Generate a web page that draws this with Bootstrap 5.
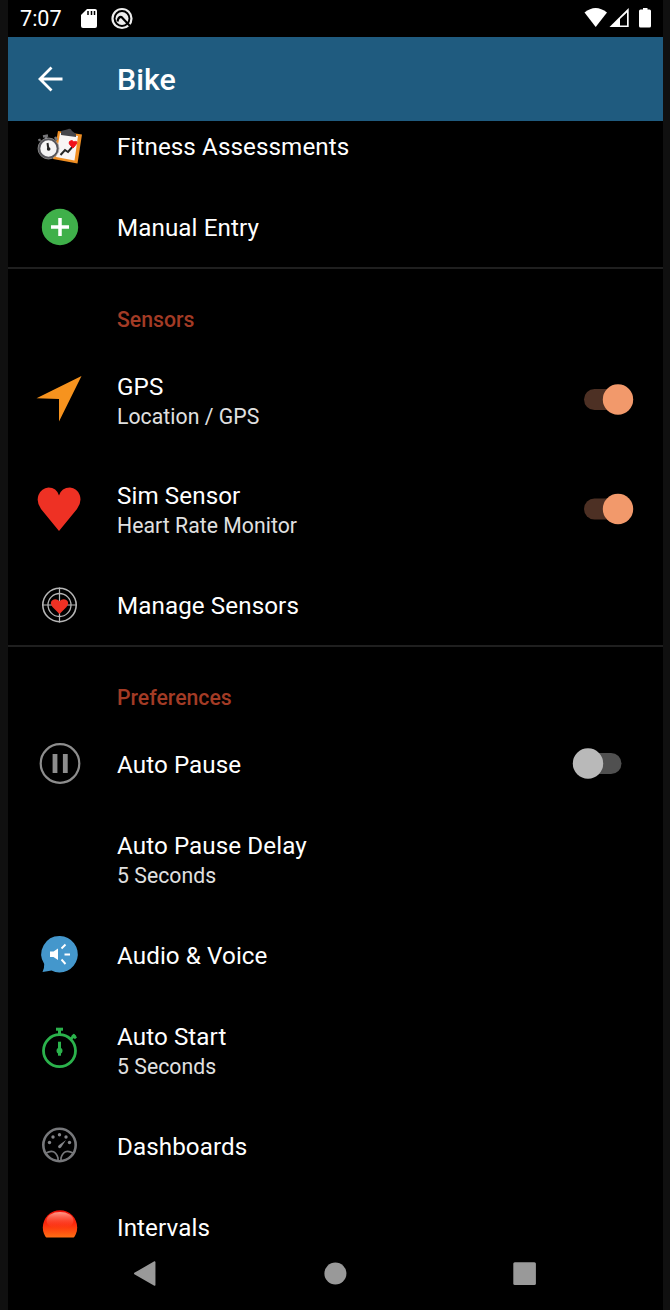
<!DOCTYPE html>
<html lang="en">
<head>
<meta charset="utf-8">
<meta name="viewport" content="width=device-width, initial-scale=1">
<title>Bike</title>
<link href="https://cdn.jsdelivr.net/npm/bootstrap@5.3.0/dist/css/bootstrap.min.css" rel="stylesheet">
<style>
body{background:#101010;font-family:Roboto,"Liberation Sans",sans-serif;color:#fff;overflow:hidden}
.phone{width:655px;height:1310px;margin-left:8px;background:#000}
.status{height:37px;padding-left:12px;font-size:21.6px;line-height:37px}
.status svg{flex:none}
.appbar{height:84px;background:#1f5b7f;padding-left:25px}
.appbar h1{font-size:30.4px;font-weight:500;line-height:36px;margin-left:30px;padding-top:2px}
.settings{height:1124px}
.settings-inner{margin-top:-14.5px}
.item{height:81.2px;padding-left:25px}
.item.before-rule{height:79.3px}
.item.tall{height:109.75px}
.item svg,.appbar svg{width:54px;height:54px;flex:none}
.item .texts{margin-left:30px;padding-top:2px}
.item.first-row .texts{padding-top:0}
.item.tall .texts{padding-top:4px}
.gap-icon{width:54px;flex:none}
.t1{font-size:24.2px;line-height:30px;letter-spacing:.09px}
.t2{font-size:21.2px;line-height:30px;color:#e0e0e0;letter-spacing:.05px}
.rule{height:2px;background:#1f1f1f}
.category{height:75.7px;padding:38px 0 0 109px;font-size:21.2px;line-height:26px;font-weight:500;color:#a33b25;letter-spacing:.02px}
.toggle{margin-left:auto;width:74px;height:32px}
.item .toggle svg{width:74px;height:32px;display:block;overflow:visible}
.navkeys{height:65px}
.navkeys svg{width:655px;height:65px}
</style>
</head>
<body>
<main class="phone d-flex flex-column overflow-hidden">
  <div class="status d-flex">
    <span>7:07</span>
    <svg class="ms-auto" width="600" height="37" viewBox="63 0 600 37">
      <path d="M87 9h8q2 0 2 2v15q0 2-2 2H83q-2 0-2-2V15z" fill="#fff"/>
      <path d="M88 11v4M91.5 11v4M94.5 11v4" stroke="#000" stroke-width="1.5"/>
      <circle cx="122" cy="18.500" r="9.500" fill="none" stroke="#eee" stroke-width="2.200"/>
      <circle cx="122" cy="18.500" r="6.500" fill="#eee"/>
      <path d="M117.500 21.500q1-5 4-4.500l8.500 9" fill="none" stroke="#000" stroke-width="2.200"/>
      <path d="M584.5 12.5q11-9 22.500 0L595.700 27z" fill="#fff"/>
      <path d="M609.500 27L628.700 8v19z" fill="#fff"/><path d="M620 19l7-6.500V25.500h-7z" fill="#000"/>
      <path d="M643 8h4.500v1.500h2q1.500 0 1.500 1.500v15q0 1.500-1.500 1.500h-9q-1.500 0-1.500-1.500V11q0-1.500 1.500-1.500h2.500z" fill="#fff"/>
    </svg>
  </div>
  <header class="appbar d-flex align-items-center">
    <svg viewBox="33 52 54 54"><path d="M62.500 79H40M51.500 67.500L40 79l11.500 11.500" fill="none" stroke="#fff" stroke-width="2.800"/></svg>
    <h1 class="mb-0">Bike</h1>
  </header>
  <section class="settings overflow-hidden">
    <div class="settings-inner">
      <div class="item first-row d-flex align-items-center">
        <svg viewBox="33 120 54 54">
          <path d="M58 131l24 3.500-4.500 29L53 159z" fill="#ef8e23"/>
          <path d="M60 133l18 3-3.500 24.500L56 157z" fill="#f8f5f5"/>
          <path d="M61 131l6-1.500q3.500-2 5 1.500l4 3v3l-15-2z" fill="#46464b"/>
          <path d="M60.500 155l4.500-5 3 2 6-7" fill="none" stroke="#252525" stroke-width="2"/>
          <path d="M73 148q-7-6-1.500-7.500 1.500 0 2 1.500 5-2 2.500 2.500z" fill="#f01018" stroke="#f01018"/>
          <path d="M43 136.500l5-1M46 137l1 4M55 137l2 3M40 141l-1-2" stroke="#77777a" stroke-width="2.500"/>
          <circle cx="48.500" cy="148.500" r="9.300" fill="#f4f4f4" stroke="#55555a" stroke-width="2.200"/>
          <circle cx="48.500" cy="148.500" r="10.500" fill="none" stroke="#aaa" stroke-width=".7"/>
          <path d="M47.500 143l1 7" stroke="#222" stroke-width="2"/><circle cx="48.700" cy="149" r="1.800" fill="#222"/>
        </svg>
        <div class="texts t1">Fitness Assessments</div>
      </div>
      <div class="item before-rule d-flex align-items-center">
        <svg viewBox="33 200 54 54"><circle cx="60" cy="227" r="18.200" fill="#3fb04a"/><path d="M51 227h18M60 218v18" stroke="#fff" stroke-width="3.500"/></svg>
        <div class="texts t1">Manual Entry</div>
      </div>
      <div class="rule"></div>
      <div class="category">Sensors</div>
      <div class="item tall d-flex align-items-center">
        <svg viewBox="33 373 54 54"><path d="M81.500 376L59 421.500V399l-22.500-.8z" fill="#f7931e"/></svg>
        <div class="texts"><div class="t1">GPS</div><div class="t2">Location / GPS</div></div>
        <div class="toggle"><svg viewBox="0 0 74 32"><path d="M5.500 5h23v21h-23a10.500 10.500 0 0 1 0-21z" fill="#4d3024"/><circle cx="29" cy="15.500" r="15.200" fill="#f2996b"/></svg></div>
      </div>
      <div class="item tall d-flex align-items-center">
        <svg viewBox="33 482 54 54"><path d="M59 531L41 509q-5-7-2.500-14 3-7 10-7.500 8 0 10.500 8 2.500-8 11-8 7 .5 9.700 7.500 2.500 7-2.700 14z" fill="#ee3124"/></svg>
        <div class="texts"><div class="t1">Sim Sensor</div><div class="t2">Heart Rate Monitor</div></div>
        <div class="toggle"><svg viewBox="0 -.5 74 32"><path d="M5.500 5h23v21h-23a10.500 10.500 0 0 1 0-21z" fill="#4d3024"/><circle cx="29" cy="15.500" r="15.200" fill="#f2996b"/></svg></div>
      </div>
      <div class="item d-flex align-items-center">
        <svg viewBox="33 577.500 54 54"><g fill="none" stroke="#b5b5b5"><circle cx="59.500" cy="604.500" r="16.700" stroke-width="1.600"/><circle cx="59.500" cy="604.500" r="11.500" stroke-width="1.300"/><path d="M42 604.500h35M59.500 587v35" stroke-width="1.200"/></g><path d="M59.500 613.500l-7-7q-3-4-.5-6.500 4-3 7.500.7 3.500-3.700 7.500-.7 2.500 2.500-.5 6.500z" fill="#ee3124"/></svg>
        <div class="texts t1">Manage Sensors</div>
      </div>
      <div class="rule"></div>
      <div class="category">Preferences</div>
      <div class="item d-flex align-items-center">
        <svg viewBox="33 736.500 54 54"><circle cx="60" cy="763" r="19.300" fill="none" stroke="#8d8d8d" stroke-width="2.200"/><path d="M55 753.500v19M65.300 753.500v19" stroke="#8d8d8d" stroke-width="4.800"/></svg>
        <div class="texts t1">Auto Pause</div>
        <div class="toggle"><svg viewBox="0 0 74 32"><path d="M0 5h22a10.500 10.500 0 0 1 0 21H0z" fill="#505050"/><circle cx="-1" cy="15.500" r="15.200" fill="#b9b9b9"/></svg></div>
      </div>
      <div class="item tall d-flex align-items-center">
        <div class="gap-icon"></div>
        <div class="texts pt-1"><div class="t1">Auto Pause Delay</div><div class="t2">5 Seconds</div></div>
      </div>
      <div class="item d-flex align-items-center">
        <svg viewBox="33 928 54 54"><path d="M60 936a18.200 18.200 0 1 1-8.500 34.500q-4 .8-9 1.500 2-4 1.700-8A18.200 18.200 0 0 1 60 936z" fill="#4497cc"/><path d="M50 951.500h3.500l4.500-3v11.500l-4.500-3H50z" fill="#fff"/><path d="M61.500 948.500l4-4M64.500 954.500h5.500M61.500 959.500l4 4.500" stroke="#fff" stroke-width="1.900"/></svg>
        <div class="texts t1">Audio &amp; Voice</div>
      </div>
      <div class="item tall d-flex align-items-center">
        <svg viewBox="33 1023.300 54 54"><g fill="none" stroke="#2bb24c"><circle cx="59.500" cy="1051" r="16" stroke-width="2.800"/><path d="M59.500 1029v6" stroke-width="3"/><path d="M56 1029.500h7" stroke-width="3"/><path d="M70 1040l5-5" stroke-width="3"/><path d="M72.500 1035l3.500 3.500" stroke-width="3"/><path d="M59.500 1042v14" stroke-width="3"/></g><circle cx="59.500" cy="1051" r="3" fill="#2bb24c"/></svg>
        <div class="texts"><div class="t1">Auto Start</div><div class="t2">5 Seconds</div></div>
      </div>
      <div class="item d-flex align-items-center">
        <svg viewBox="33 1119 54 54"><g fill="none" stroke="#77787b"><circle cx="59.500" cy="1145" r="16.200" stroke-width="2.600"/><path d="M46 1153q9-5 12 5v3M73 1153q-9-5-12 5v3" stroke-width="1.700"/></g><g fill="#85868a"><circle cx="49.500" cy="1142.500" r="1.700"/><circle cx="53" cy="1137" r="1.700"/><circle cx="59.500" cy="1134.800" r="1.700"/><circle cx="66" cy="1137" r="1.700"/><circle cx="69.500" cy="1142.500" r="1.700"/><path d="M66 1140l-5 7.500q-2 1.500-3-.5 0-1.500 1.500-2.200z"/></g></svg>
        <div class="texts t1">Dashboards</div>
      </div>
      <div class="item d-flex align-items-center">
        <svg viewBox="33 1200 54 54"><defs><linearGradient id="ball" x1="0" y1="0" x2="0" y2="1"><stop offset="0" stop-color="#f20d05"/><stop offset=".4" stop-color="#fc2a0c"/><stop offset=".8" stop-color="#ff7014"/></linearGradient><linearGradient id="shine" x1="0" y1="0" x2="0" y2="1"><stop offset="0" stop-color="#ff9c8c"/><stop offset="1" stop-color="#ff4020" stop-opacity="0"/></linearGradient><clipPath id="edge"><path d="M33 1200h54v37.500H33z"/></clipPath></defs><g clip-path="url(#edge)"><circle cx="60" cy="1227.500" r="17.200" fill="url(#ball)"/><ellipse cx="60" cy="1220.500" rx="13.500" ry="8.500" fill="url(#shine)"/></g></svg>
        <div class="texts t1">Intervals</div>
      </div>
    </div>
  </section>
  <nav class="navkeys">
    <svg class="d-block" viewBox="8 1245 655 65" fill="#999" stroke="#999" stroke-linejoin="round"><path d="M134.700 1273.500l20-11.500v23z" stroke-width="1.500"/><circle cx="335.400" cy="1273.500" r="11" stroke="none"/><rect x="513.300" y="1262.300" width="22.600" height="22.600" rx="1.500" stroke="none"/></svg>
  </nav>
</main>
<script src="https://cdn.jsdelivr.net/npm/bootstrap@5.3.0/dist/js/bootstrap.bundle.min.js"></script>
</body>
</html>
